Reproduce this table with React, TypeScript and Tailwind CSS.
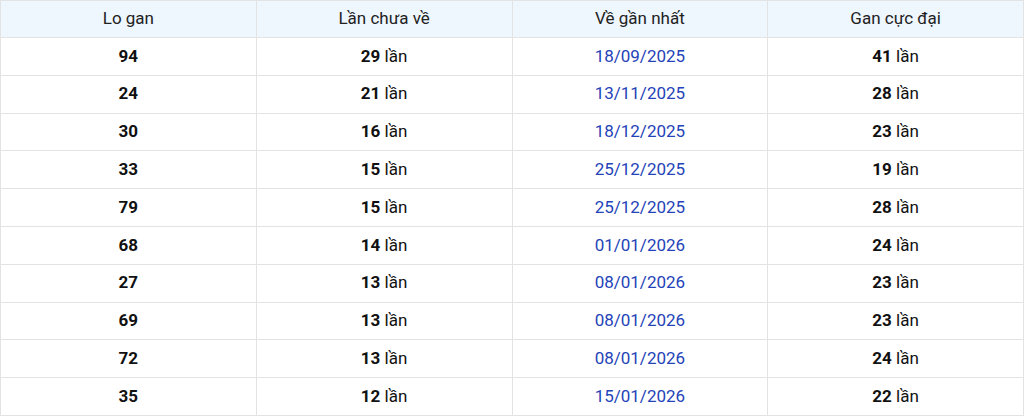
import React from "react";

const rows: [string, string, string, string][] = [
  ["94", "29", "18/09/2025", "41"],
  ["24", "21", "13/11/2025", "28"],
  ["30", "16", "18/12/2025", "23"],
  ["33", "15", "25/12/2025", "19"],
  ["79", "15", "25/12/2025", "28"],
  ["68", "14", "01/01/2026", "24"],
  ["27", "13", "08/01/2026", "23"],
  ["69", "13", "08/01/2026", "23"],
  ["72", "13", "08/01/2026", "24"],
  ["35", "12", "15/01/2026", "22"],
];

export default function App() {
  return (
    <div className="w-[1024px] h-[416px] bg-white overflow-hidden" style={{ fontFamily: "Roboto, 'Liberation Sans', sans-serif" }}>
      <table className="w-full border-collapse table-fixed text-[17px] text-[#111]">
        <thead>
          <tr className="bg-[#eef6fe] h-[37px]">
            {["Lo gan", "Lần chưa về", "Về gần nhất", "Gan cực đại"].map((h) => (
              <th key={h} className="font-normal text-[#222] border border-[#e3e3e3] p-0 text-center">
                {h}
              </th>
            ))}
          </tr>
        </thead>
        <tbody>
          {rows.map((r, i) => (
            <tr key={i} className="h-[37.8px]">
              <td className="border border-[#e3e3e3] p-0 text-center font-bold">{r[0]}</td>
              <td className="border border-[#e3e3e3] p-0 text-center">
                <span className="font-bold">{r[1]}</span> lần
              </td>
              <td className="border border-[#e3e3e3] p-0 text-center text-[#2443b8]">{r[2]}</td>
              <td className="border border-[#e3e3e3] p-0 text-center">
                <span className="font-bold">{r[3]}</span> lần
              </td>
            </tr>
          ))}
        </tbody>
      </table>
    </div>
  );
}
